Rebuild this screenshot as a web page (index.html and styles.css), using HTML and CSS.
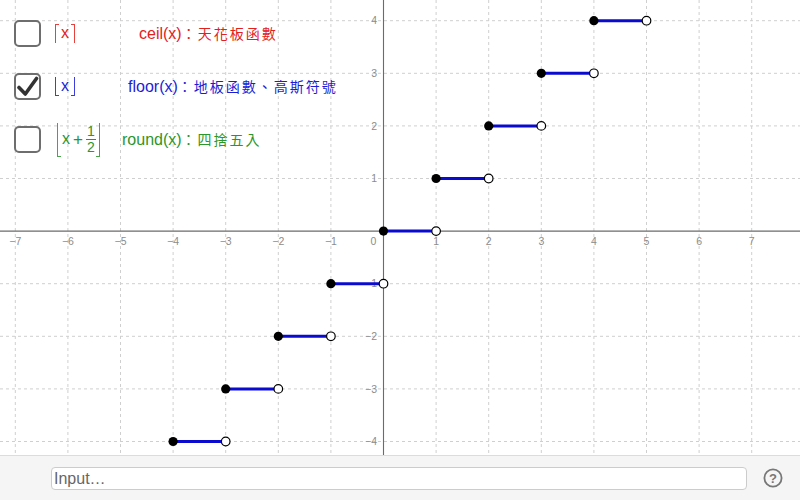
FILE: index.html
```html
<!DOCTYPE html>
<html lang="zh-Hant">
<head>
<meta charset="utf-8">
<title>Floor and ceiling</title>
<link rel="stylesheet" href="styles.css">
</head>
<body>
<div class="app">
  <div class="canvas">
    <svg class="graph" width="800" height="455" viewBox="0 0 800 455" xmlns="http://www.w3.org/2000/svg">
      <g class="grid">
        <line x1="15.3" y1="0" x2="15.3" y2="455"/>
        <line x1="67.9" y1="0" x2="67.9" y2="455"/>
        <line x1="120.5" y1="0" x2="120.5" y2="455"/>
        <line x1="173.1" y1="0" x2="173.1" y2="455"/>
        <line x1="225.7" y1="0" x2="225.7" y2="455"/>
        <line x1="278.3" y1="0" x2="278.3" y2="455"/>
        <line x1="330.9" y1="0" x2="330.9" y2="455"/>
        <line x1="436.1" y1="0" x2="436.1" y2="455"/>
        <line x1="488.7" y1="0" x2="488.7" y2="455"/>
        <line x1="541.3" y1="0" x2="541.3" y2="455"/>
        <line x1="593.9" y1="0" x2="593.9" y2="455"/>
        <line x1="646.5" y1="0" x2="646.5" y2="455"/>
        <line x1="699.1" y1="0" x2="699.1" y2="455"/>
        <line x1="751.7" y1="0" x2="751.7" y2="455"/>
        <line x1="0" y1="20.7" x2="800" y2="20.7"/>
        <line x1="0" y1="73.3" x2="800" y2="73.3"/>
        <line x1="0" y1="125.9" x2="800" y2="125.9"/>
        <line x1="0" y1="178.5" x2="800" y2="178.5"/>
        <line x1="0" y1="283.7" x2="800" y2="283.7"/>
        <line x1="0" y1="336.3" x2="800" y2="336.3"/>
        <line x1="0" y1="388.9" x2="800" y2="388.9"/>
        <line x1="0" y1="441.5" x2="800" y2="441.5"/>
      </g>
      <g class="axes">
        <line x1="0" y1="231.1" x2="800" y2="231.1"/>
        <line x1="383.5" y1="0" x2="383.5" y2="455"/>
      </g>
      <g class="ticks xt">
        <text x="15.3" y="245">−7</text>
        <text x="67.9" y="245">−6</text>
        <text x="120.5" y="245">−5</text>
        <text x="173.1" y="245">−4</text>
        <text x="225.7" y="245">−3</text>
        <text x="278.3" y="245">−2</text>
        <text x="330.9" y="245">−1</text>
        <text x="373.5" y="245">0</text>
        <text x="436.1" y="245">1</text>
        <text x="488.7" y="245">2</text>
        <text x="541.3" y="245">3</text>
        <text x="593.9" y="245">4</text>
        <text x="646.5" y="245">5</text>
        <text x="699.1" y="245">6</text>
        <text x="751.7" y="245">7</text>
      </g>
      <g class="ticks yt">
        <text x="377" y="24.4">4</text>
        <text x="377" y="77">3</text>
        <text x="377" y="129.6">2</text>
        <text x="377" y="182.2">1</text>
        <text x="377" y="287.4">−1</text>
        <text x="377" y="340">−2</text>
        <text x="377" y="392.6">−3</text>
        <text x="377" y="445.2">−4</text>
      </g>
      <g class="steps">
        <line x1="173.1" y1="441.5" x2="225.7" y2="441.5"/>
        <line x1="225.7" y1="388.9" x2="278.3" y2="388.9"/>
        <line x1="278.3" y1="336.3" x2="330.9" y2="336.3"/>
        <line x1="330.9" y1="283.7" x2="383.5" y2="283.7"/>
        <line x1="383.5" y1="231.1" x2="436.1" y2="231.1"/>
        <line x1="436.1" y1="178.5" x2="488.7" y2="178.5"/>
        <line x1="488.7" y1="125.9" x2="541.3" y2="125.9"/>
        <line x1="541.3" y1="73.3" x2="593.9" y2="73.3"/>
        <line x1="593.9" y1="20.7" x2="646.5" y2="20.7"/>
      </g>
      <g class="closed">
        <circle cx="173.1" cy="441.5" r="4.6"/>
        <circle cx="225.7" cy="388.9" r="4.6"/>
        <circle cx="278.3" cy="336.3" r="4.6"/>
        <circle cx="330.9" cy="283.7" r="4.6"/>
        <circle cx="383.5" cy="231.1" r="4.6"/>
        <circle cx="436.1" cy="178.5" r="4.6"/>
        <circle cx="488.7" cy="125.9" r="4.6"/>
        <circle cx="541.3" cy="73.3" r="4.6"/>
        <circle cx="593.9" cy="20.7" r="4.6"/>
      </g>
      <g class="open">
        <circle cx="225.7" cy="441.5" r="4.3"/>
        <circle cx="278.3" cy="388.9" r="4.3"/>
        <circle cx="330.9" cy="336.3" r="4.3"/>
        <circle cx="383.5" cy="283.7" r="4.3"/>
        <circle cx="436.1" cy="231.1" r="4.3"/>
        <circle cx="488.7" cy="178.5" r="4.3"/>
        <circle cx="541.3" cy="125.9" r="4.3"/>
        <circle cx="593.9" cy="73.3" r="4.3"/>
        <circle cx="646.5" cy="20.7" r="4.3"/>
      </g>
    </svg>

    <div class="panel">
      <div class="row red">
        <span class="checkbox"></span>
        <span class="formula"><span class="br ceil"><span class="var">x</span></span></span>
        <span class="label label-ceil">ceil(x)<span class="zh">：天花板函數</span></span>
      </div>
      <div class="row blue">
        <span class="checkbox checked">
          <svg width="23" height="23" viewBox="0 0 23 23"><path d="M3 12.5 L9.3 19 L20.5 3.5" fill="none" stroke="#333" stroke-width="3.6" stroke-linecap="round" stroke-linejoin="round"/></svg>
        </span>
        <span class="formula"><span class="br floor"><span class="var">x</span></span></span>
        <span class="label label-floor">floor(x)<span class="zh">：地板函數、高斯符號</span></span>
      </div>
      <div class="row green">
        <span class="checkbox"></span>
        <span class="formula"><span class="br floor tall"><span class="var">x</span><span class="op">+</span><span class="frac"><span class="num">1</span><span class="den">2</span></span></span></span>
        <span class="label label-round">round(x)<span class="zh">：四捨五入</span></span>
      </div>
    </div>
  </div>

  <div class="bar">
    <div class="input">Input…</div>
    <svg class="help" width="22" height="22" viewBox="0 0 22 22">
      <circle cx="11" cy="11" r="8.6" fill="none" stroke="#777" stroke-width="1.8"/>
      <text x="11" y="15.6" text-anchor="middle" class="help-q">?</text>
    </svg>
  </div>
</div>
</body>
</html>
```

FILE: styles.css
```css
html, body {
  margin: 0;
  padding: 0;
}
body {
  width: 800px;
  height: 500px;
  overflow: hidden;
  background: #ffffff;
  font-family: "Liberation Sans", Arial, sans-serif;
}
.app {
  display: flex;
  flex-direction: column;
  width: 800px;
  height: 500px;
}
.canvas {
  position: relative;
  flex: none;
  height: 455px;
  background: #ffffff;
}
.graph {
  display: block;
}
.grid line {
  stroke: #cfcfcf;
  stroke-width: 1;
  stroke-dasharray: 3 3;
}
.axes line {
  stroke: #6b6b6b;
  stroke-width: 1.1;
}
.ticks text {
  font-family: "Liberation Sans", Arial, sans-serif;
  font-size: 10.5px;
  fill: #8c8c8c;
}
.xt text {
  text-anchor: middle;
}
.yt text {
  text-anchor: end;
}
.steps line {
  stroke: #0b0bcf;
  stroke-width: 3;
}
.closed circle {
  fill: #000000;
}
.open circle {
  fill: #ffffff;
  stroke: #000000;
  stroke-width: 1.2;
}

/* overlay panel of check boxes */
.panel {
  position: absolute;
  top: 20px;
  left: 14px;
  display: flex;
  flex-direction: column;
  gap: 26px;
}
.row {
  display: flex;
  align-items: center;
  height: 27px;
}
.red { color: #e3211c; }
.blue { color: #1d1dd6; }
.green { color: #2b962b; }

.checkbox {
  box-sizing: border-box;
  width: 27px;
  height: 27px;
  border: 2px solid #6e6e6e;
  border-radius: 5px;
  background: #ffffff;
  display: flex;
  align-items: center;
  justify-content: center;
  flex: none;
}
.checkbox svg {
  display: block;
}
.formula {
  width: 50px;
  margin-left: 14px;
  display: flex;
  align-items: center;
  flex: none;
}
.br {
  position: relative;
  display: inline-flex;
  align-items: center;
  justify-content: center;
  height: 19px;
  padding: 0 6px;
  font-size: 16px;
  line-height: 16px;
}
.br::before,
.br::after {
  content: "";
  position: absolute;
  top: 0;
  bottom: 0;
  width: 3px;
  border: 0 solid currentColor;
  opacity: 0.85;
}
.br::before { left: 0; border-left-width: 1px; }
.br::after { right: 0; border-right-width: 1px; }
.ceil::before, .ceil::after { border-top-width: 1px; }
.floor::before, .floor::after { border-bottom-width: 1px; }
.var {
  display: block;
  padding-bottom: 1px;
}
.tall {
  height: 34px;
  padding: 0 4px 0 5px;
  margin-left: 2px;
}
.op {
  margin: 0 3px;
  font-size: 17px;
}
.frac {
  display: flex;
  flex-direction: column;
  align-items: center;
  font-size: 14px;
  line-height: 15px;
}
.num {
  display: block;
  padding: 0 1px;
  border-bottom: 1px solid currentColor;
}
.den {
  display: block;
}

.label {
  font-size: 16px;
  white-space: nowrap;
  line-height: 20px;
}
.label-ceil { margin-left: 34px; }
.label-floor { margin-left: 23px; }
.label-round { margin-left: 17px; }
.zh {
  font-family: "Noto Sans CJK TC", "Noto Sans CJK SC", sans-serif;
  font-size: 14px;
  letter-spacing: 2px;
}

/* input bar */
.bar {
  box-sizing: border-box;
  flex: none;
  height: 45px;
  border-top: 1px solid #dcdcdc;
  background: #f5f5f5;
  display: flex;
  align-items: center;
  padding-left: 51px;
}
.input {
  box-sizing: border-box;
  width: 696px;
  height: 23px;
  border: 1px solid #cccccc;
  border-radius: 4px;
  background: #ffffff;
  color: #666666;
  font-size: 16px;
  line-height: 21px;
  padding-left: 2px;
}
.help {
  display: block;
  margin-left: 15px;
}
.help-q {
  font-family: "Liberation Sans", Arial, sans-serif;
  font-size: 13px;
  font-weight: bold;
  fill: #777777;
}
```
